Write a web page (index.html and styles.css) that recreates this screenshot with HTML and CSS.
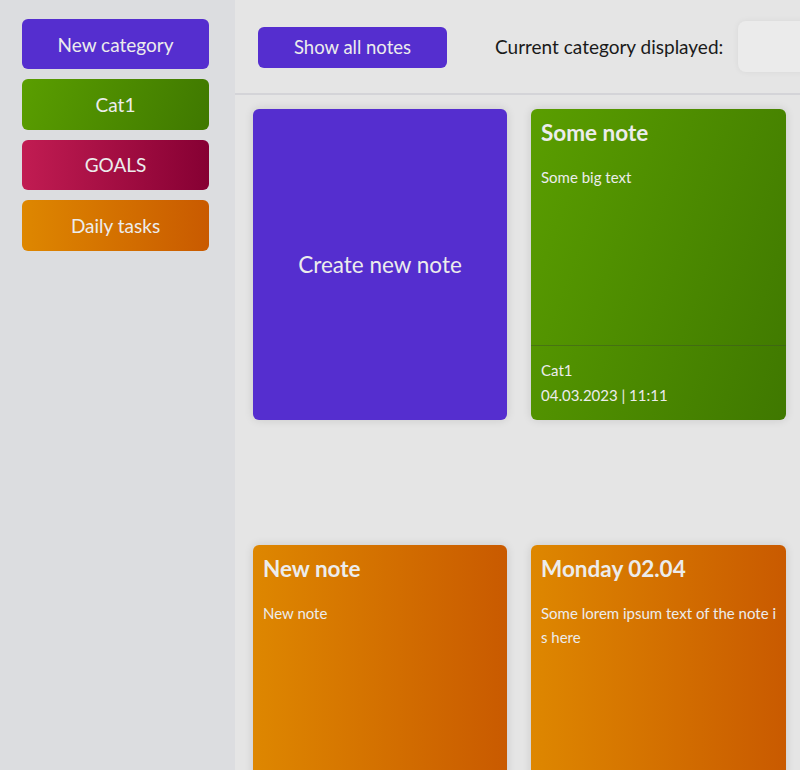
FILE: index.html
```html
<!DOCTYPE html>
<html>
<head>
<meta charset="utf-8">
<link rel="stylesheet" href="styles.css">
</head>
<body>
<aside class="sidebar">
  <button class="cat purple">New category</button>
  <button class="cat green">Cat1</button>
  <button class="cat red">GOALS</button>
  <button class="cat orange">Daily tasks</button>
</aside>
<main class="main">
  <header class="topbar">
    <button class="show-all">Show all notes</button>
    <span class="current-label">Current category displayed:</span>
    <div class="current-box"></div>
  </header>
  <section class="notes">
    <div class="note create">Create new note</div>
    <div class="note green">
      <div class="note-body">
        <h2 class="note-title">Some note</h2>
        <p class="note-text">Some big text</p>
      </div>
      <div class="note-footer">
        <div>Cat1</div>
        <div>04.03.2023 | 11:11</div>
      </div>
    </div>
    <div class="note orange">
      <div class="note-body">
        <h2 class="note-title">New note</h2>
        <p class="note-text">New note</p>
      </div>
    </div>
    <div class="note orange">
      <div class="note-body">
        <h2 class="note-title">Monday 02.04</h2>
        <p class="note-text">Some lorem ipsum text of the note is here</p>
      </div>
    </div>
  </section>
</main>
</body>
</html>
```

FILE: styles.css
```css
* { box-sizing: border-box; }
html, body { margin: 0; height: 100%; }
body {
  display: flex;
  font-family: Lato, "Open Sans", sans-serif;
  background: #e5e5e5;
  overflow: hidden;
}
.sidebar {
  width: 235px;
  flex: none;
  background: #dcdde0;
  padding: 19px 26px 0 22px;
  display: flex;
  flex-direction: column;
  gap: 10px;
  min-height: 770px;
}
.cat {
  height: 50.4px;
  flex: none;
  border: none;
  border-radius: 6px;
  color: #ececec;
  font-family: inherit;
  font-size: 19px;
  padding: 0;
}
.purple { background: #552ecf; }
.green { background: linear-gradient(110deg, #5a9e00 0%, #3f7800 100%); }
.red { background: linear-gradient(90deg, #c11c52 0%, #860033 100%); }
.orange { background: linear-gradient(90deg, #de8700 0%, #c95a00 100%); }
.main { flex: 1; min-width: 0; overflow: hidden; }
.topbar {
  height: 95px;
  border-bottom: 2px solid #d4d4d8;
  display: flex;
  align-items: center;
  padding-left: 23px;
  padding-bottom: 3px;
}
.show-all {
  flex: none;
  width: 189px;
  height: 41px;
  margin-top: 4px;
  border: none;
  border-radius: 6px;
  background: #552ecf;
  color: #ececec;
  font-family: inherit;
  font-size: 18.5px;
  padding: 0;
}
.current-label {
  flex: none;
  white-space: nowrap;
  margin-left: 48px;
  font-size: 19px;
  color: #1a1a1a;
  margin-top: 3px;
}
.current-box {
  margin-left: 15px;
  width: 160px;
  height: 51px;
  margin-top: 2px;
  flex: none;
  border-radius: 8px;
  background: #ebebeb;
  box-shadow: 0 0 6px rgba(0,0,0,0.06);
}
.notes {
  display: grid;
  grid-template-columns: 254px 255px;
  column-gap: 24px;
  row-gap: 125px;
  padding: 14px 0 0 18px;
}
.note {
  height: 311px;
  border-radius: 6px;
  color: #ececec;
  display: flex;
  flex-direction: column;
  box-shadow: 0 0 10px rgba(0,0,0,0.12);
}
.note.create {
  background: #552ecf;
  align-items: center;
  justify-content: center;
  font-size: 22.5px;
}
.note-body { flex: 1; padding: 10px 9px 0 10px; }
.note-title {
  margin: 0;
  font-size: 22.5px;
  font-weight: 700;
  line-height: 28px;
}
.note-text {
  margin: 18px 0 0;
  font-size: 15px;
  line-height: 24px;
  word-break: break-all;
}
.note-footer {
  border-top: 1px solid rgba(60,80,40,0.45);
  height: 75px;
  padding: 12px 9px 0 10px;
  font-size: 15px;
  line-height: 25px;
}
```
